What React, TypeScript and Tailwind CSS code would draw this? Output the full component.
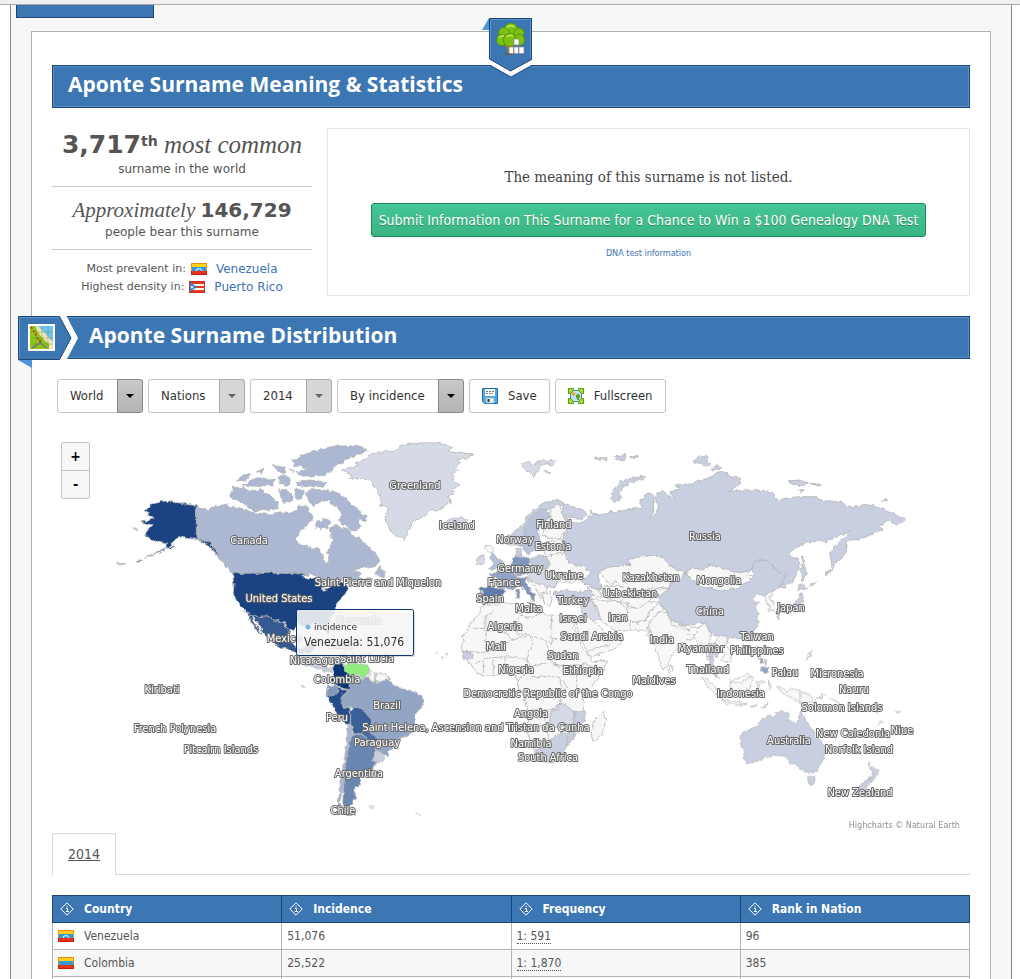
import { type ReactNode } from "react";

interface regionProps {
  name: string;
  x: number;
  y: number;
  shapes: [string, string][];
}

interface countryProps {
  country: string;
  incidence: string;
  frequency: string;
  rank: string;
}

const land = "#f7f7f7";
const pale = "#d5dae6";
const light = "#c8cfe0";
const canada = "#acb8d1";
const dark = "#1b4382";

// shapes are drawn in thirds of a map unit, starting from x / y of the region
const regions: regionProps[] = [
  {
    name: "north-america",
    x: 110,
    y: 430,
    shapes: [
      [
        canada,
        "M259 228L280 235 295 240 305 232 325 230 350 220 360 230 385 232 405 240 430 248 455 250 480 255 510 248 540 250 560 240 570 225 590 230 600 245 610 265 600 275 585 290 570 305 560 325 558 335 575 345 600 352 630 358 638 375 645 400 650 402 658 385 652 365 662 350 668 330 660 310 658 295 670 285 690 290 715 300 730 320 750 322 760 335 780 355 800 375 810 392 800 405 770 412 740 418 720 430 740 425 755 430 745 440 760 448 790 445 770 455 740 462 720 455 700 450 690 458 670 455 650 470 635 480 645 462 625 445 605 435 590 436 560 430H368L345 405 330 390 318 372 300 350 280 335 259 328Z",
      ],
      [canada, "M795 432L805 415 812 410 825 430 822 442 805 440Z"],
      [
        canada,
        "M585 185L610 178 640 180 670 185 695 195 715 210 735 232 772 262 760 275 745 265 750 288 735 305 710 292 685 270 697 255 690 240 670 225 655 210 625 218 610 228 595 210Z",
      ],
      [
        canada,
        "M358 200L370 172 400 172 420 185 450 178 480 195 500 215 510 235 480 240 450 238 430 245 410 225 385 215Z",
      ],
      [canada, "M620 280L640 265 660 275 655 290 635 298 615 292Z"],
      [
        canada,
        "M380 150L400 135 425 130 415 145 395 152ZM400 165L420 152 450 140 470 150 500 148 485 165 450 170 425 168ZM440 125L462 115 455 130ZM488 105L520 112 530 125 510 130ZM505 140L520 135 545 150 540 165 515 165ZM535 115L555 125 550 130Z",
      ],
      [
        canada,
        "M555 155L600 150 655 158 640 168 600 172 560 165ZM505 180L530 178 550 195 545 215 520 220 515 200ZM552 180L580 178 575 205 560 210Z",
      ],
      [
        canada,
        "M545 95L565 80 600 68 640 55 680 48 740 48 772 60 750 72 720 82 700 95 680 105 665 120 650 135 610 138 575 138 560 128 590 118 575 110 555 108Z",
      ],
      [
        dark,
        "M259 228L230 223 206 218 188 213 163 211 145 218 128 221 115 235 102 242 118 250 112 258 133 265 120 270 92 272 105 280 130 285 112 298 104 310 108 318 125 328 150 338 175 342 165 355 140 368 115 378 95 388 120 378 150 366 178 350 192 335 202 320 215 322 240 326 259 328Z",
      ],
      [dark, "M259 328L288 333 300 342 318 360 328 374 316 366 300 350 280 336Z"],
      [dark, "M178 354L190 345 196 349 184 357ZM80 393L95 388 90 394Z"],
      [light, "M18 401L45 400 40 404ZM70 293L82 297 76 299Z"],
      [
        dark,
        "M368 430H560L590 436 605 440 625 447 645 462 635 482 650 478 672 460 690 456 705 460 716 475 700 500 680 520 675 540 670 555 655 580 660 610 650 612 640 590 620 580 600 585 580 590 565 580 550 600 538 598 525 580 505 572 490 570 470 558 445 560 425 555 412 550 400 535 380 515 370 490 372 465Z",
      ],
      ["#ffffff", "M575 440L602 431 624 441 606 447Z"],
      [
        "#36598f",
        "M412 550L445 560 470 558 490 570 505 572 520 580 538 598 535 620 545 640 560 655 590 650 600 640 620 640 612 660 595 670 580 672 560 668 520 655 490 640 470 620 455 600 440 575 425 560 430 575 445 595 458 615 452 612 435 590 420 570Z",
      ],
    ],
  },
  {
    name: "greenland",
    x: 280,
    y: 430,
    shapes: [
      [
        pale,
        "M188 118L210 112 235 105 225 98 250 90 275 72 305 68 320 60 340 65 360 50 390 42 440 38 490 42 515 52 505 62 530 65 555 70 582 72 560 85 530 90 540 100 520 112 538 122 515 130 520 150 540 165 512 178 520 190 505 198 515 215 495 228 480 238 450 242 430 262 405 270 390 285 385 310 375 328 350 318 330 300 320 280 312 262 325 245 320 230 300 225 302 208 295 190 280 165 265 150 235 145 205 145 215 135 190 125Z",
      ],
      [pale, "M500 272L520 262 545 262 562 272 550 285 520 287Z"],
    ],
  },
  {
    name: "south-america",
    x: 280,
    y: 600,
    shapes: [
      [light, "M35 175L70 178 95 185 115 190 130 205 150 205 160 200 158 212 140 215 120 205 95 198 60 190Z"],
      [light, "M100 120L140 118 175 135 150 132ZM185 140L215 140 220 150 190 152Z"],
      ["#0b3474", "M165 190L185 188 192 205 205 222 222 228 208 240 208 270 185 262 160 250 152 240 160 225 158 205Z"],
      ["#90ed7d", "M190 195L205 190 235 190 262 195 270 210 262 228 245 235 238 225 222 228 205 222 192 208Z"],
      [land, "M270 205L285 220 285 245 270 235ZM285 220L320 222 325 240 300 246 285 242Z"],
      [
        "#93a5c5",
        "M208 240L222 232 245 238 262 232 272 240 290 248 320 240 328 235 335 255 350 262 385 270 412 280 432 300 425 320 408 340 405 370 398 395 385 405 360 410 340 440 320 468 300 455 285 450 300 425 280 410 270 395 272 375 262 362 240 345 225 325 210 320 190 325 182 300 192 285 208 270Z",
      ],
      ["#8299be", "M145 258L165 255 178 262 170 280 150 292 138 285Z"],
      [
        "#234c8a",
        "M138 285L150 292 170 280 178 262 190 268 205 272 190 285 182 300 190 325 210 325 212 350 210 370 195 368 175 350 160 320 145 300Z",
      ],
      ["#3b6098", "M212 330L232 320 260 340 272 358 272 380 262 385 245 400 222 402 212 380Z"],
      ["#4b6ca1", "M245 400L262 385 272 395 282 410 298 415 292 432 275 435 262 415Z"],
      [
        "#a9b6d0",
        "M205 368L214 385 218 405 208 430 200 470 195 520 190 560 180 600 182 620 200 630 225 645 210 648 190 640 175 615 180 560 190 500 200 430Z",
      ],
      [
        "#6b86b1",
        "M218 405L245 402 262 415 275 432 292 432 298 425 288 445 282 470 290 485 280 500 275 515 240 530 245 545 235 560 218 570 230 590 215 605 208 625 188 612 190 570 195 520 200 470 208 430Z",
      ],
      [light, "M285 450L305 460 315 475 300 488 280 485Z"],
      [land, "M265 618L283 620 278 626 266 624ZM410 640L424 644 420 648ZM66 256L76 260 74 264Z"],
      [land, "M470 157L476 159 474 161ZM484 170L490 172 488 176ZM496 160L502 158 500 166Z"],
    ],
  },
  {
    name: "europe",
    x: 450,
    y: 430,
    shapes: [
      [
        light,
        "M345 225L370 228 400 240 410 255 395 268 360 265 348 255 355 275 385 280 400 275 415 265 425 255 420 240 428 250 450 255 475 245 500 245 530 240 560 235 575 235 570 210 585 195 600 185 612 200 610 225 612 245 600 262 620 250 625 225 615 205 620 190 635 185 650 195 670 203 660 185 695 175 675 165 720 162 760 150 800 130 832 125 835 140 870 145 875 160 835 185 890 180 940 182 970 190 985 212 1040 200 1090 200 1120 212 1170 215 1190 228 1230 232 1235 222 1290 230 1340 255 1367 268 1340 285 1315 270 1290 285 1295 300 1260 315 1235 328 1195 330 1190 345 1190 365 1170 390 1145 410 1140 370 1160 345 1200 305 1170 318 1145 325 1130 335 1070 335 1040 350 1015 375 1045 385 1048 420 1030 450 1000 475 985 470 1008 432 980 425 965 400 935 388 915 395 902 420 870 428 832 422 810 410 775 405 760 420 730 415 705 428 658 408 640 382 585 376 538 388 540 405 475 412 448 425 445 440 455 480 430 475 400 460 385 445 400 440 420 430 400 410 355 400 348 385 345 370 345 345 335 325 350 300 345 270 335 250Z",
      ],
      [
        light,
        "M145 335L165 325 185 310 205 295 220 280 235 255 250 240 275 222 305 212 335 212 345 225 320 222 300 235 285 235 265 240 250 255 235 275 225 290 222 315 215 345 195 345 180 345Z",
      ],
      [
        "#b9c4da",
        "M222 315L225 290 235 270 250 255 268 240 290 238 300 260 285 275 270 290 265 305 270 330 255 345 250 365 235 375 222 360 215 345Z",
      ],
      [land, "M300 232L330 225 335 250 345 270 350 300 330 322 300 328 280 315 280 295 300 275Z"],
      [light, "M198 355L212 355 215 375 200 378Z"],
      [land, "M105 350L125 345 130 360 122 370 110 362Z"],
      ["#b6c1d8", "M125 370L140 380 160 400 155 412 130 418 115 415 130 402 122 390Z"],
      [pale, "M80 388L100 375 105 395 95 405 78 400Z"],
      ["#90a4c6", "M115 430L140 428 165 418 180 425 205 440 200 455 205 470 185 478 160 475 140 470 145 455 130 440Z"],
      ["#5f7dac", "M88 472L115 470 140 472 165 480 155 495 140 515 115 520 105 520 85 515 90 495Z"],
      ["#b6c1d8", "M88 485L98 487 95 515 82 512Z"],
      [light, "M165 418L180 405 190 395 190 420 200 435 180 425Z"],
      ["#7f96bd", "M188 385L200 378 225 380 238 385 240 400 235 420 240 430 200 435 188 420Z"],
      ["#c0cadd", "M240 385L265 375 290 378 298 400 295 418 270 418 245 408Z"],
      [pale, "M235 420L270 418 295 418 300 430 325 460 320 470 290 470 255 460 230 445Z"],
      [land, "M232 445L258 460 290 468 285 490 300 510 290 525 275 505 255 475Z"],
      [land, "M275 492L300 488 308 510 300 530 285 520Z"],
      ["#8096bd", "M205 440L230 445 225 455 240 480 258 495 250 515 240 500 220 475 205 462Z"],
      ["#8096bd", "M198 478L208 478 208 503 198 505ZM225 513L245 515 240 525Z"],
      [
        land,
        "M290 418L300 400 305 372 330 365 348 385 355 400 400 410 420 430 405 445 380 455 365 460 350 450 335 460 315 440Z",
      ],
      [land, "M275 340L330 328 345 345 345 370 305 372 290 378 275 360Z"],
      [light, "M310 485L345 480 385 485 420 480 430 498 420 515 370 520 325 515Z"],
      [land, "M400 460L430 475 450 482 455 502 430 498 420 480Z"],
      [pale, "M390 520L425 512 440 540 455 565 430 575 400 550Z"],
      [land, "M425 508L460 512 500 515 530 530 535 560 545 600 500 605 470 585 450 560Z"],
      [
        land,
        "M448 425L475 412 540 405 538 388 585 376 640 382 658 408 705 428 690 445 662 460 655 475 620 472 590 478 570 490 540 475 510 470 500 455 480 465 465 445Z",
      ],
      [land, "M460 470L510 470 540 475 570 490 600 490 610 500 590 520 560 535 520 518 480 510Z"],
      [land, "M595 480L655 475 640 490 615 500 600 492Z"],
      [land, "M530 530L560 535 600 515 625 520 600 545 590 570 560 580 535 570Z"],
      [land, "M545 600L535 570 560 580 590 570 600 545 625 520 640 535 625 560 610 590 595 610 575 600Z"],
      [pale, "M215 100L235 95 250 105 265 98 275 110 262 125 252 140 240 130 225 118ZM255 95L290 90 318 95 305 105 275 102ZM280 125L298 125 298 131Z"],
      [light, "M480 205L490 180 510 155 545 145 580 138 585 145 550 155 525 165 510 185 510 210 490 215Z"],
      [light, "M435 85L470 83 470 89 445 91ZM490 82L515 76 530 70 525 88 500 90ZM535 80L563 80 550 86Z"],
    ],
  },
  {
    name: "africa",
    x: 450,
    y: 580,
    shapes: [
      [
        land,
        "M95 78L120 75 150 70 195 68 205 75 200 95 215 105 245 115 265 100 300 105 335 108 365 108 375 130 370 145 385 175 400 210 420 232 432 245 472 240 465 265 440 300 415 330 400 345 400 390 408 395 402 420 385 440 375 460 370 480 350 500 335 525 305 545 270 545 258 530 250 500 235 470 232 440 238 410 228 380 220 345 205 325 205 300 195 285 165 280 130 288 100 290 75 270 55 245 38 222 35 195 40 180 35 178 50 150 70 120 90 95Z",
      ],
      [pale, "M300 400L330 370 350 375 375 395 380 430 355 430 330 445 300 430Z"],
      [light, "M258 510L280 505 300 480 330 460 350 462 355 490 335 525 305 545 270 545 258 530Z"],
      [light, "M375 395L408 395 402 420 385 440 372 460 370 480 352 495 355 455 370 430Z"],
      [light, "M35 215L60 215 72 235 40 238Z"],
      [land, "M460 395L468 420 455 460 440 485 425 480 425 450 435 420Z"],
      [land, "M380 115L410 105 440 130 470 160 490 165 520 175 505 200 470 215 420 232 412 215 395 180 380 145Z"],
      [
        "none",
        "M70 145H105V110L130 95M105 110L150 145 190 180 240 165M215 105L195 130 200 160 240 165 305 190M305 108V190M305 175H385M245 165V200L230 235M40 215H110L105 145M110 215L150 195 190 180M75 250L110 235 165 230 225 235 240 260 290 250M290 190L300 240 330 265M165 230V280M230 235L245 265 205 300M130 240V285M100 240V290M300 250L350 260 400 250 432 265M240 290H330L335 340 325 390H240M330 290L350 320 335 340M380 280V330L400 345M285 390V440H240M285 440L300 480M412 215L450 200 480 195",
      ],
    ],
  },
  {
    name: "asia",
    x: 640,
    y: 430,
    shapes: [
      [light, "M160 95L175 78 200 80 205 95 215 100 200 112 180 100ZM212 118L230 105 248 112 235 122ZM448 152L480 150 505 158 490 168 455 162ZM512 160L542 162 532 168ZM475 180L493 180 487 186ZM720 213L740 206 742 212Z"],
      [
        light,
        "M135 428L155 450 185 470 240 482 290 475 330 450 342 438 332 420 345 395 365 388 395 400 410 425 438 432 428 455 415 475 390 490 370 498 350 490 335 512 355 515 345 528 355 550 355 580 340 605 310 620 290 628 270 622 245 618 220 618 205 600 200 578 175 578 155 588 120 582 90 568 78 545 60 520 52 500 85 480 92 460 120 450z",
      ],
      [
        land,
        "M135 428L160 415 190 420 205 405 240 410 262 422 300 428 332 422 320 435 342 438 330 450 290 475 240 482 185 470 155 450Z",
      ],
      [land, "M370 498L400 480 408 482 388 505 400 515 405 535 388 545 385 520Z"],
      [light, "M480 490L475 505 460 525 440 540 410 540 408 555 418 568 418 545 440 550 470 535 485 520 490 500ZM480 462L505 470 490 482 475 478ZM488 380L495 415 500 435 488 455 485 420ZM510 466L530 455 520 465ZM555 437L578 410 568 430Z"],
      [
        land,
        "M55 545L78 545 95 575 130 588 150 600 165 590 185 600 165 625 145 630 120 645 95 675 85 700 72 717 60 695 45 650 30 625 20 615 35 605 22 595 30 575Z",
      ],
      [land, "M88 705L96 710 98 725 90 729 84 719Z"],
      [land, "M175 590L200 578 205 600 215 620 205 640 215 670 205 690 195 660 175 650 165 625Z"],
      [light, "M205 640L225 640 245 660 230 680 215 672 220 710 235 745 225 740 210 700Z"],
      [land, "M225 640L240 618 265 625 260 645 275 670 275 690 255 700 245 690 255 670Z"],
      ["none", "M90 568L92 582 130 598 150 600M140 612L165 615"],
    ],
  },
  {
    name: "oceania",
    x: 640,
    y: 600,
    shapes: [
      [land, "M185 230L200 235 225 262 245 285 250 300 235 290 205 262Z"],
      [land, "M268 240L300 235 325 220 340 235 330 265 310 278 285 275 270 260ZM270 245L300 248 335 230"],
      [land, "M245 300L290 305 320 315 300 315 250 308ZM350 245L375 248 358 255 365 275 350 270ZM330 320L352 316 345 322ZM362 322L385 312 372 322ZM385 240L395 260 388 270Z"],
      [land, "M410 262L430 265 440 275 455 265 480 272 510 285 520 300 535 315 510 305 490 310 480 310 460 295 435 285ZM480 272V310"],
      [land, "M530 295L558 280 545 293ZM565 290L600 310 590 308ZM498 178L514 156 508 170ZM710 372L728 365 722 372ZM712 335L718 340ZM765 330L782 336Z"],
      ["#93a5c5", "M352 135L362 165 354 160ZM358 172L368 172 370 190 362 188ZM374 178L382 190 376 194ZM362 205L382 200 385 215 370 220Z"],
      [
        light,
        "M300 410L305 398 335 385 360 370 370 355 390 345 400 355 412 335 440 335 448 345 445 360 470 372 478 350 482 332 492 345 498 365 515 385 530 410 550 430 557 450 550 475 540 500 530 515 505 518 480 508 465 490 450 492 440 475 405 465 370 475 345 485 320 490 312 480 315 460 305 440Z",
      ],
      [light, "M500 530L525 530 522 550 510 555Z"],
      [light, "M683 487L695 500 718 512 710 525 700 540 685 535 697 522ZM690 535L695 545 680 558 665 575 640 580 650 565 675 545Z"],
    ],
  },
];

// name, centre x, baseline y
const labels: [string, number, number][] = [
  ["Greenland", 415, 489],
  ["Iceland", 457, 529],
  ["Canada", 249, 544],
  ["Saint Pierre and Miquelon", 378, 586],
  ["United States", 279, 602],
  ["Bermuda", 359, 624],
  ["Mexico", 284, 642],
  ["Cuba", 340, 648],
  ["Nicaragua", 315, 664],
  ["Saint Lucia", 367, 662],
  ["Colombia", 337, 683],
  ["Brazil", 387, 709],
  ["Peru", 337, 721],
  ["Saint Helena, Ascension and Tristan da Cunha", 476, 731],
  ["Paraguay", 377, 746],
  ["Argentina", 359, 777],
  ["Chile", 343, 814],
  ["Kiribati", 162, 693],
  ["French Polynesia", 175, 732],
  ["Pitcairn Islands", 221, 753],
  ["Finland", 554, 528],
  ["Norway", 515, 543],
  ["Estonia", 553, 550],
  ["Germany", 520, 572],
  ["Ukraine", 564, 579],
  ["France", 504, 586],
  ["Spain", 490, 602],
  ["Malta", 529, 612],
  ["Turkey", 573, 604],
  ["Israel", 573, 622],
  ["Iran", 618, 621],
  ["Kazakhstan", 651, 581],
  ["Uzbekistan", 630, 597],
  ["Algeria", 505, 630],
  ["Saudi Arabia", 592, 640],
  ["Mali", 496, 650],
  ["Sudan", 563, 659],
  ["Nigeria", 516, 673],
  ["Ethiopia", 583, 674],
  ["Democratic Republic of the Congo", 548, 697],
  ["Angola", 531, 717],
  ["Namibia", 531, 747],
  ["South Africa", 548, 761],
  ["Russia", 705, 540],
  ["Mongolia", 719, 584],
  ["China", 710, 615],
  ["Japan", 791, 611],
  ["India", 662, 643],
  ["Taiwan", 757, 640],
  ["Myanmar", 701, 652],
  ["Philippines", 757, 654],
  ["Thailand", 708, 673],
  ["Maldives", 654, 684],
  ["Palau", 785, 676],
  ["Micronesia", 837, 677],
  ["Nauru", 854, 693],
  ["Indonesia", 741, 697],
  ["Solomon Islands", 842, 711],
  ["Australia", 789, 744],
  ["New Caledonia", 853, 737],
  ["Niue", 902, 734],
  ["Norfolk Island", 859, 753],
  ["New Zealand", 860, 796],
];

const countries: countryProps[] = [
  { country: "Venezuela", incidence: "51,076", frequency: "1: 591", rank: "96" },
  { country: "Colombia", incidence: "25,522", frequency: "1: 1,870", rank: "385" },
];

const Flag = ({ country }: { country: string }) => (
  <svg width="16" height="12" viewBox="0 0 16 12" className="inline-block shrink-0" aria-hidden="true">
    {country === "Puerto Rico" ? (
      <>
        <path fill="#e8361f" d="M0 0h16v12H0z" />
        <path fill="#fff" d="M1 3h14v2H1zM1 7h14v2H1z" />
        <path fill="#2b86d0" d="M1 1l7 5-7 5z" />
        <path fill="#fff" d="M3 4.2l.6 1.2H5L4 6.3l.4 1.4L3 6.9l-1.200.8.4-1.400-.9-.9h1.200z" />
        <path fill="none" stroke="#c93322" d="M.5.5h15v11H.5z" />
      </>
    ) : (
      <>
        <path fill="#ffd21a" d="M0 0h16v5H0z" />
        <path fill="#2d9ae0" d="M0 4h16v4H0z" />
        <path fill="#e8321a" d="M0 8h16v4H0z" />
        {country === "Venezuela" && (
          <path d="M5 7.500q3-4 6 0" fill="none" stroke="#fff" strokeWidth="1.300" strokeDasharray="1.500 .6" />
        )}
        <path fill="none" stroke="#f08a10" d="M.5 8V.5h15V8" />
        <path fill="none" stroke="#c21c10" d="M.5 8v3.500h15V8" />
      </>
    )}
  </svg>
);

const TreeRibbon = () => (
  <svg
    width="52"
    height="62"
    viewBox="0 0 52 62"
    className="absolute left-1/2 -top-[50px] -ml-[29px]"
    aria-hidden="true"
  >
    <path fill="#4f94d4" d="M0 14L7 2v12z" />
    <path fill="#fff" stroke="#fff" d="M8 44h42v4L29 60 8 48z" />
    <path fill="none" stroke="#1f4672" d="M8 50l21 11 21-11" opacity=".6" />
    <path fill="#3c76b3" stroke="#1f4672" d="M7.500 2.500h42v41L28.500 55 7.500 43z" />
    <path fill="none" stroke="#5a95d3" d="M8.500 42V3.500h40V42" />
    <path fill="none" stroke="#b8731a" strokeWidth="2.500" d="M22 27q5 4 5 10M27 33l4-4" />
    <path stroke="#7a4a10" d="M23 38h9" />
    <g fill="#7cc010" stroke="#4f8a08" strokeWidth=".7">
      <circle cx="29" cy="14" r="7" />
      <circle cx="22" cy="17" r="5.500" />
      <circle cx="37" cy="17" r="5" />
      <circle cx="20" cy="24" r="5.500" />
      <circle cx="37" cy="24" r="5.500" />
      <circle cx="28" cy="24" r="6.500" />
    </g>
    <path fill="none" stroke="#c4ea60" strokeWidth="1.500" d="M25 12q3-4 7-1M17 22q2-3 5-2M25 21q3-3 6-1" />
    <path fill="#fff" stroke="#8a8a8a" strokeWidth=".7" d="M32 23h4l1 1.500V29h-5zM27 31h4.500v6.500H27zM32 31h4.500v6.500H32zM37 31h5v6.500h-5z" />
  </svg>
);

const MapRibbon = () => (
  <svg
    width="64"
    height="54"
    viewBox="0 0 64 54"
    className="absolute -left-[35px] -top-[2px]"
    aria-hidden="true"
  >
    <path fill="#fff" d="M34 0h14l12 23-12 23H34z" />
    <path fill="#4f94d4" d="M0 45h14v8z" />
    <path fill="#3c76b3" stroke="#1f4672" d="M.5 1.500h41L53 23 41.500 44.500H.5z" />
    <path fill="none" stroke="#5a95d3" d="M1.500 43.500v-41H41" />
    <path fill="#fff" d="M10 9h27v27H10z" />
    <path fill="#6fc4f0" d="M12 11h23v23H12z" />
    <path fill="#f4e3bd" d="M16 11h4l15 16v7H12V11z" />
    <path fill="#8cc81c" d="M12 11h5q3 9 14 18v5H12z" />
    <path fill="none" stroke="#5f8f20" strokeWidth=".6" opacity=".6" d="M12 17h23M12 23h23M12 29h23M18 11v23M24 11v23M30 11v23" />
    <path fill="none" stroke="#777" strokeWidth="1.500" d="M14 33l8-5 7 5M22 28v-4" />
    <path fill="none" stroke="#e02010" strokeWidth="1.500" strokeDasharray="2 2" d="M13 12l4 6 3 6 3 3" />
  </svg>
);

const SaveIcon = () => (
  <svg width="16" height="16" viewBox="0 0 16 16" aria-hidden="true">
    <path fill="#53a9e2" stroke="#1d6ba8" d="M.5.5h15v15H2.500l-2-2z" />
    <path fill="#fff" d="M3 1h10v7H3z" />
    <path stroke="#777" strokeDasharray="2 1" d="M4 3.500h8M4 5.500h7" />
    <path fill="#e9eef2" stroke="#8db2cc" strokeWidth=".6" d="M4 10h8v5H4z" />
    <path fill="#333" d="M5.500 11h2v3h-2z" />
  </svg>
);

const FullscreenIcon = () => (
  <svg width="16" height="16" viewBox="0 0 16 16" aria-hidden="true">
    <path fill="#b9e0fa" stroke="#4a86c6" d="M2.500 2.500h11v11h-11z" />
    <circle cx="5.500" cy="6" r="1.800" fill="#f7a81c" />
    <path fill="#58a018" d="M10 6a2.300 2.300 0 0 1 1 4.300V12H9v-1.700A2.300 2.300 0 0 1 10 6z" />
    <path
      fill="#a4de2a"
      stroke="#4d8a0c"
      strokeWidth=".9"
      d="M.5.500h5v2l-3 3h-2zM15.500.500h-5v2l3 3h2zM.5 15.500v-5h2l3 3v2zM15.500 15.500v-5h-2l-3 3v2z"
    />
  </svg>
);

const InfoIcon = () => (
  <svg width="14" height="14" viewBox="0 0 14 14" className="shrink-0" aria-hidden="true">
    <path fill="none" stroke="#fff" d="M7 .8L13.200 7 7 13.200.8 7z" />
    <path fill="none" stroke="#fff" d="M6 6.500h1.500V9.500M5.800 9.500h3M7 4v1" />
  </svg>
);

const Banner = ({ children, title, className }: { children: ReactNode; title: string; className: string }) => (
  <div className="relative border border-[#1f4672] bg-[#3c76b3] h-[43px] shadow-[inset_0_0_0_1px_#5a90ca]">
    <h2
      className={`font-['Open_Sans',sans-serif] text-[21px] leading-9 font-bold text-white ${className}`}
    >
      {title}
    </h2>
    {children}
  </div>
);

const Dropdown = ({ label, value, muted }: { label: string; value: string; muted?: boolean }) => (
  <div className="relative flex">
    <select
      aria-label={label}
      className="h-[34px] appearance-none rounded-[3px] border border-[#c4c4c4] bg-white pl-3 pr-[38px] text-[13px] text-[#333]"
    >
      <option>{value}</option>
    </select>
    <span
      className={`pointer-events-none absolute inset-y-0 right-0 flex w-[26px] items-center justify-center rounded-r-[3px] border ${
        muted ? "border-[#aaa] bg-[#d6d6d6] text-[#666]" : "border-[#888] bg-linear-to-b from-[#c8c8c8] to-[#b4b4b4] text-black"
      }`}
    >
      <svg width="8" height="4" viewBox="0 0 8 4" aria-hidden="true">
        <path fill="currentColor" d="M0 0h8L4 4z" />
      </svg>
    </span>
  </div>
);

const WorldMap = () => (
  <div className="relative">
    <svg viewBox="52 429 918 404" className="block w-full" role="img" aria-label="Surname distribution">
      <filter id="coast" x="0" y="0" width="1" height="1" colorInterpolationFilters="sRGB">
        <feTurbulence type="fractalNoise" baseFrequency=".2" numOctaves="2" seed="4" />
        <feDisplacementMap in="SourceGraphic" scale="5" xChannelSelector="R" yChannelSelector="G" />
      </filter>
      <g filter="url(#coast)" stroke="#b4b4b4" strokeWidth="2.400" strokeLinejoin="round">
        {regions.map((region) => (
          <g key={region.name} transform={`translate(${region.x} ${region.y}) scale(.3333)`}>
            {region.shapes.map(([fill, d]) => (
              <path key={d} fill={fill} d={d} />
            ))}
          </g>
        ))}
      </g>
      <g
        fill="#fff"
        stroke="#666"
        strokeWidth="2"
        strokeLinejoin="round"
        paintOrder="stroke"
        textAnchor="middle"
        className="text-[11px] font-medium"
      >
        {labels.map(([name, x, y]) => (
          <text key={name} x={x} y={y}>
            {name}
          </text>
        ))}
      </g>
      <g>
        <rect x="298" y="611" width="117" height="46" rx="2" fill="#000" opacity=".15" />
        <rect x="296.500" y="609.500" width="117" height="46" rx="2" fill="#f9f9f9" fillOpacity=".88" stroke="#0b3474" />
        <circle cx="308" cy="627" r="2.500" fill="#7cb5ec" />
        <text x="314" y="630" fill="#333" className="font-['DejaVu_Sans',sans-serif] text-[9px]">
          incidence
        </text>
        <text x="304" y="646" fill="#333" className="text-[12px]">
          Venezuela: 51,076
        </text>
      </g>
      <text x="960" y="828" textAnchor="end" fill="#909090" className="text-[9px]">
        Highcharts © Natural Earth
      </text>
    </svg>
    <div className="absolute left-[9px] top-[13px] flex w-[29px] flex-col rounded-[2px] border border-[#c4c4c4] bg-[#f7f7f7] text-[14px] font-bold text-black">
      <button type="button" aria-label="Zoom in" className="h-[28px] border-b border-[#c4c4c4]">
        +
      </button>
      <button type="button" aria-label="Zoom out" className="h-[27px]">
        -
      </button>
    </div>
  </div>
);

const Stats = () => (
  <div className="w-[260px] shrink-0 text-center font-['DejaVu_Sans',sans-serif] text-[#555]">
    <div className="h-[59px] border-b border-[#c8c8c8] pt-px">
      <p className="whitespace-nowrap font-['Liberation_Serif',serif] text-[25px] leading-8 italic">
        <span className="font-['DejaVu_Sans',sans-serif] text-[25px] font-bold not-italic">
          3,717<sup className="text-[14px]">th</sup>
        </span>{" "}
        most common
      </p>
      <p className="text-[12px] leading-4">surname in the world</p>
    </div>
    <div className="h-[63px] border-b border-[#c8c8c8] pt-[9px]">
      <p className="whitespace-nowrap font-['Liberation_Serif',serif] text-[21px] leading-7 italic">
        Approximately{" "}
        <span className="font-['DejaVu_Sans',sans-serif] text-[20px] font-bold not-italic">146,729</span>
      </p>
      <p className="text-[12px] leading-4">people bear this surname</p>
    </div>
    <div className="pt-[10px] text-[11px]">
      <p className="flex h-[18px] items-center justify-center gap-[5px]">
        Most prevalent in: <Flag country="Venezuela" />
        <a href="#venezuela" className="ml-1 text-[12px] text-[#3d72b4]">
          Venezuela
        </a>
      </p>
      <p className="flex h-[18px] items-center justify-center gap-[5px]">
        Highest density in: <Flag country="Puerto Rico" />
        <a href="#puerto-rico" className="ml-1 text-[12px] text-[#3d72b4]">
          Puerto Rico
        </a>
      </p>
    </div>
  </div>
);

const App = () => {
  return (
    <div className="flex h-screen flex-col overflow-hidden bg-white font-['DejaVu_Sans_Condensed','DejaVu_Sans',sans-serif] text-[#555]">
      <div className="h-[5px] shrink-0 border-b border-[#aaa] bg-[#f0f0f0]"></div>
      <div className="ml-[10px] mr-2 flex grow flex-col border-x border-[#888] bg-[#f7f7f7] px-5">
        <div className="-ml-[15px] h-[13px] w-[138px] shrink-0 border border-t-0 border-[#1f4672] bg-[#3c76b3]"></div>
        <main className="mt-[13px] grow border border-b-0 border-[#b0b0b0] bg-white px-5 pt-[33px]">
          <Banner title="Aponte Surname Meaning & Statistics" className="pl-[15px]">
            <TreeRibbon />
          </Banner>
          <div className="mt-5 flex gap-[15px]">
            <Stats />
            <div className="flex h-[168px] grow flex-col items-center border border-[#e6e6e6] pt-9">
              <p className="font-['DejaVu_Serif_Condensed','DejaVu_Serif',serif] text-[15px] leading-6 text-[#444]">
                The meaning of this surname is not listed.
              </p>
              <button
                type="button"
                className="mt-[14px] h-[34px] rounded-[3px] border border-[#1f8a5f] bg-linear-to-b from-[#45c696] to-[#3ab580] px-[7px] text-[14px] whitespace-nowrap text-white [text-shadow:0_1px_0_#2a8a60]"
              >
                Submit Information on This Surname for a Chance to Win a $100 Genealogy DNA Test
              </button>
              <a href="#dna" className="mt-[10px] text-[9px] leading-3 text-[#3d72b4]">
                DNA test information
              </a>
            </div>
          </div>
          <div className="mt-5">
            <Banner title="Aponte Surname Distribution" className="pl-[36px]">
              <MapRibbon />
            </Banner>
          </div>
          <div className="mt-5 mb-4 ml-[5px] flex gap-[5px]">
            <Dropdown label="Region" value="World" />
            <Dropdown label="Level" value="Nations" muted />
            <Dropdown label="Year" value="2014" muted />
            <Dropdown label="Measure" value="By incidence" />
            {[
              { label: "Save", icon: <SaveIcon /> },
              { label: "Fullscreen", icon: <FullscreenIcon /> },
            ].map((item) => (
              <button
                type="button"
                key={item.label}
                className="flex h-[34px] items-center gap-[10px] rounded-[3px] border border-[#c4c4c4] px-3 text-[13px] text-[#333]"
              >
                {item.icon}
                {item.label}
              </button>
            ))}
          </div>
          <WorldMap />
          <div className="flex">
            <a
              href="#2014"
              className="h-[42px] rounded-t-[3px] border border-b-0 border-[#d8d8d8] px-[15px] text-[14px] leading-10 underline"
            >
              2014
            </a>
            <div className="grow border-b border-[#d8d8d8]"></div>
          </div>
          <table className="mt-5 w-full table-fixed border-collapse text-left text-[12px] leading-[18px]">
            <thead>
              <tr className="h-[27px] bg-[#3c76b3] text-white">
                {["Country", "Incidence", "Frequency", "Rank in Nation"].map((title) => (
                  <th key={title} className="border border-[#1f4672] px-[7px] font-bold">
                    <span className="flex items-center gap-[10px]">
                      <InfoIcon />
                      {title}
                    </span>
                  </th>
                ))}
              </tr>
            </thead>
            <tbody>
              {countries.map((item) => (
                <tr key={item.country} className="h-[27px] even:bg-[#f7f7f7]">
                  <td className="border border-[#b4b4b4] px-[5px]">
                    <span className="flex items-center gap-[10px]">
                      <Flag country={item.country} />
                      {item.country}
                    </span>
                  </td>
                  <td className="border border-[#b4b4b4] px-[5px]">{item.incidence}</td>
                  <td className="border border-[#b4b4b4] px-[5px]">
                    <span className="border-b border-dotted border-[#555]">{item.frequency}</span>
                  </td>
                  <td className="border border-[#b4b4b4] px-[5px]">{item.rank}</td>
                </tr>
              ))}
              <tr className="h-[27px]">
                <td className="border border-[#b4b4b4]"></td>
                <td className="border border-[#b4b4b4]"></td>
                <td className="border border-[#b4b4b4]"></td>
                <td className="border border-[#b4b4b4]"></td>
              </tr>
            </tbody>
          </table>
        </main>
      </div>
    </div>
  );
};

export default App;
